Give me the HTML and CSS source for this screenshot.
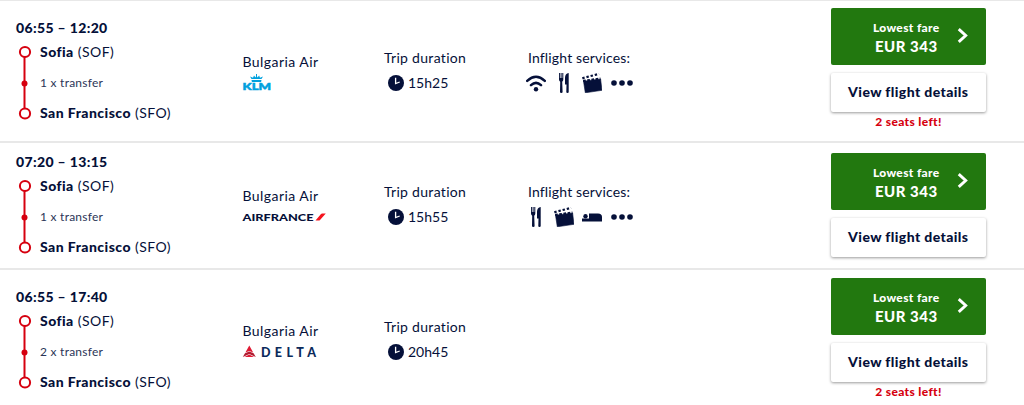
FILE: index.html
```html
<!DOCTYPE html>
<html lang="en">
<head>
  <meta charset="UTF-8" />
  <title>Flight results</title>
  <link rel="stylesheet" href="styles.css">
</head>
<body>
  <!-- Shared icons -->
  <svg class="sprite" width="0" height="0">
    <symbol id="clock" viewBox="0 0 16 16">
      <circle cx="8" cy="8" r="8" fill="#051039"/>
      <path d="M7.600 2.800v5.700L11.700 7" fill="none" stroke="#fff" stroke-width="1.300"/>
    </symbol>
    <symbol id="wifi" viewBox="0 0 20 18">
      <path d="M1.200 6.800Q10-1.300 18.800 6.800M5 11.200Q10 6.600 15 11.200" fill="none" stroke="#051039" stroke-width="2.500" stroke-linecap="round"/>
      <circle cx="10" cy="15.200" r="2.200" fill="#051039"/>
    </symbol>
    <symbol id="meal" viewBox="0 0 10 20">
      <path d="M0 0h.9v5h.7V0h1v5h.7V0h1v6.500q0 1.600-1.100 2.200L3.600 19q0 1-1.300 1T1 19l.2-10.300Q0 8 0 6.500zM9.700 0v19q0 1-1.200 1t-1.200-1l.2-7.500H6V5Q6 .5 9.700 0z" fill="#051039"/>
    </symbol>
    <symbol id="film" viewBox="0 0 20 20">
      <path d="M1.500 8.200 18.600 6 20 17.300 3.300 19.800z" fill="#051039" stroke="#051039" stroke-width=".6" stroke-linejoin="round"/>
      <path d="M.3 5.300 17 .8" stroke="#051039" stroke-width="2.200" stroke-dasharray="2.400 1.900"/>
      <path d="M1.100 7.900 18.500 5.600" stroke="#051039" stroke-width="2.200" stroke-dasharray="2.700 1.500"/>
    </symbol>
    <symbol id="bed" viewBox="0 0 20 9">
      <path d="M0 5.600h20v2.900H0zM7 5.800V.5h9q4 0 4 3.500v1.800z" fill="#051039"/>
      <circle cx="3.500" cy="3.200" r="2.200" fill="#051039"/>
    </symbol>
    <symbol id="more" viewBox="0 0 22 6">
      <circle cx="3" cy="3" r="2.800" fill="#051039"/>
      <circle cx="11" cy="3" r="2.800" fill="#051039"/>
      <circle cx="19" cy="3" r="2.800" fill="#051039"/>
    </symbol>
    <symbol id="arrow" viewBox="0 0 10 14">
      <path d="M1.500 1 8 7 1.500 13" fill="none" stroke="#fff" stroke-width="2.700"/>
    </symbol>
    <symbol id="route" viewBox="0 0 14 76">
      <path d="M6.500 7v62" stroke="#d6000f" stroke-width="2"/>
      <circle cx="7" cy="7" r="5.100" fill="#fff" stroke="#d6000f" stroke-width="2"/>
      <circle cx="6.500" cy="38.500" r="3" fill="#d6000f"/>
      <circle cx="7" cy="68.500" r="5.100" fill="#fff" stroke="#d6000f" stroke-width="2"/>
    </symbol>
  </svg>

  <!-- KLM -->
  <section class="flight flight-first">
    <div class="trip">
      <div class="times">06:55 – 12:20</div>
      <div class="stops">
        <svg class="route"><use href="#route"/></svg>
        <div class="names">
          <div class="city"><b>Sofia</b> (SOF)</div>
          <div class="transfer">1 x transfer</div>
          <div class="city"><b>San Francisco</b> (SFO)</div>
        </div>
      </div>
    </div>
    <div class="airline">
      <div class="label">Bulgaria Air</div>
      <svg class="logo" width="90" height="20" viewBox="0 0 90 20">
        <path d="M9.500 6h10l-.4 2H9.900zM9.500 5 8 2.500l3 1.300L12 1.500l1.600 2L14.500 1 15.500 3.500l1.600-2 .9 2.300 3-1.300L19.500 5zM14 0h1v2h-1z" fill="#00a1de"/>
        <text class="klm" x=".5" y="16.400" textLength="28.500" lengthAdjust="spacingAndGlyphs">KLM</text>
      </svg>
    </div>
    <div class="duration">
      <div class="label">Trip duration</div>
      <div class="time"><svg class="clock"><use href="#clock"/></svg>15h25</div>
    </div>
    <div class="services">
      <div class="label">Inflight services:</div>
      <div class="icons">
        <svg class="wifi"><use href="#wifi"/></svg>
        <svg class="meal"><use href="#meal"/></svg>
        <svg class="film"><use href="#film"/></svg>
        <svg class="more"><use href="#more"/></svg>
      </div>
    </div>
    <div class="fare">
      <button class="price"><span class="amount"><small>Lowest fare</small>EUR 343</span><svg class="arrow"><use href="#arrow"/></svg></button>
      <button class="details">View flight details</button>
      <div class="seats">2 seats left!</div>
    </div>
  </section>

  <!-- Air France -->
  <section class="flight flight-second">
    <div class="trip">
      <div class="times">07:20 – 13:15</div>
      <div class="stops">
        <svg class="route"><use href="#route"/></svg>
        <div class="names">
          <div class="city"><b>Sofia</b> (SOF)</div>
          <div class="transfer">1 x transfer</div>
          <div class="city"><b>San Francisco</b> (SFO)</div>
        </div>
      </div>
    </div>
    <div class="airline">
      <div class="label">Bulgaria Air</div>
      <svg class="logo" width="90" height="20" viewBox="0 0 90 20">
        <text class="airfrance" x=".5" y="12.500" textLength="71" lengthAdjust="spacingAndGlyphs">AIRFRANCE</text>
        <path d="M73.500 12.500 79 6q.4-.5 1.200-.5h3.600L78 12q-.4.500-1.200.500z" fill="#f5141e"/>
      </svg>
    </div>
    <div class="duration">
      <div class="label">Trip duration</div>
      <div class="time"><svg class="clock"><use href="#clock"/></svg>15h55</div>
    </div>
    <div class="services">
      <div class="label">Inflight services:</div>
      <div class="icons">
        <svg class="meal meal-start"><use href="#meal"/></svg>
        <svg class="film"><use href="#film"/></svg>
        <svg class="bed"><use href="#bed"/></svg>
        <svg class="more"><use href="#more"/></svg>
      </div>
    </div>
    <div class="fare">
      <button class="price"><span class="amount"><small>Lowest fare</small>EUR 343</span><svg class="arrow"><use href="#arrow"/></svg></button>
      <button class="details">View flight details</button>
    </div>
  </section>

  <!-- Delta -->
  <section class="flight flight-third">
    <div class="trip">
      <div class="times">06:55 – 17:40</div>
      <div class="stops">
        <svg class="route"><use href="#route"/></svg>
        <div class="names">
          <div class="city"><b>Sofia</b> (SOF)</div>
          <div class="transfer">2 x transfer</div>
          <div class="city"><b>San Francisco</b> (SFO)</div>
        </div>
      </div>
    </div>
    <div class="airline">
      <div class="label">Bulgaria Air</div>
      <svg class="logo" width="90" height="20" viewBox="0 0 90 20">
        <path d="M7.300 2.500 11.200 9.600 7.300 7.900 3.400 9.600z" fill="#e01933"/>
        <path d="M3 10.300 7.300 8.400V11L.8 14zM11.600 10.300 7.300 8.400V11l6.500 3z" fill="#b01c30"/>
        <path d="M2.500 14 7.300 11.600 12.100 14z" fill="#e01933"/>
        <text class="delta" x="19" y="13.700" textLength="55" lengthAdjust="spacing">DELTA</text>
      </svg>
    </div>
    <div class="duration">
      <div class="label">Trip duration</div>
      <div class="time"><svg class="clock"><use href="#clock"/></svg>20h45</div>
    </div>
    <div class="services"></div>
    <div class="fare">
      <button class="price"><span class="amount"><small>Lowest fare</small>EUR 343</span><svg class="arrow"><use href="#arrow"/></svg></button>
      <button class="details">View flight details</button>
      <div class="seats">2 seats left!</div>
    </div>
  </section>
</body>
</html>
```

FILE: styles.css
```css
body {
  margin: 0;
  font-family: Lato, "Open Sans", sans-serif;
  font-size: 14px;
  color: #051039;
  background: #fff;
  overflow: hidden;
}
.sprite, svg { display: block; }
.sprite { position: absolute; }
.flight {
  display: grid;
  grid-template-columns: 226px 142px 143px 303.5px 156px;
  align-items: start;
  box-sizing: border-box;
  padding-left: 16px;
  border-bottom: 2px solid #e8e8e8;
}
.flight-first {
  height: 143px;
  padding-top: 17px;
  border-top: 1px solid #e8e8e8;
}
.flight-second {
  height: 127px;
  padding-top: 9px;
}
.flight-third {
  height: 135px;
  padding-top: 17px;
  border-bottom: 0;
}
.times {
  line-height: 20px;
  font-weight: 900;
  letter-spacing: 0.35px;
}
.stops {
  display: flex;
  gap: 8px;
  padding: 6.5px 0 0 2px;
}
.route {
  width: 14px;
  height: 76px;
}
.names { margin-top: -3px; }
.city {
  line-height: 20px;
  font-size: 14px;
  letter-spacing: 0.45px;
  white-space: nowrap;
}
.city b { font-weight: 900; }
.transfer {
  line-height: 20px;
  margin: 11px 0 10px;
  font-size: 12px;
  letter-spacing: 0.25px;
  color: #2c3557;
}
.airline { padding-top: 34px; }
.label {
  line-height: 20px;
  letter-spacing: 0.3px;
  white-space: nowrap;
}
.airline .label {
  padding-left: 0.5px;
  letter-spacing: 0.45px;
}
.logo { margin-top: 2px; }
.klm {
  font: 900 10px Lato, sans-serif;
  fill: #00a1de;
  stroke: #00a1de;
  stroke-width: 0.5px;
}
.airfrance {
  font: 900 9.5px Lato, sans-serif;
  fill: #051039;
}
.delta {
  font: 900 12.5px Lato, sans-serif;
  fill: #0b2a5b;
}
.duration, .services { padding-top: 30px; }
.services .label {
  padding-left: 1px;
  letter-spacing: 0.15px;
}
.time {
  display: flex;
  align-items: center;
  gap: 4px;
  margin-top: 5px;
  padding-left: 4px;
  line-height: 20px;
}
.clock {
  width: 16px;
  height: 16px;
}
.icons {
  display: flex;
  align-items: center;
  height: 20px;
  margin-top: 5px;
  margin-left: -1px;
}
.wifi {
  width: 20px;
  height: 18px;
}
.meal {
  width: 10px;
  height: 20px;
  margin: 0 13px;
}
.meal-start { margin-left: 5px; }
.film {
  width: 20px;
  height: 20px;
  margin-right: 9px;
}
.flight-second .film { margin-right: 8px; }
.bed {
  width: 20px;
  height: 9px;
  margin-right: 9px;
}
.more {
  width: 22px;
  height: 6px;
}
.fare { text-align: center; }
.flight-first .fare { margin-top: -10px; }
.flight-second .fare { margin-top: 1px; }
.flight-third .fare { margin-top: -9px; }
button {
  display: flex;
  align-items: center;
  justify-content: center;
  width: 155.5px;
  padding: 0;
  border: 0;
  border-radius: 2px;
  font: bold 14px Lato, sans-serif;
  color: #051039;
}
.price {
  height: 57px;
  padding-left: 24px;
  gap: 17px;
  background: #22780f;
  color: #fff;
  font-size: 15px;
  font-weight: 900;
  letter-spacing: 0.5px;
}
.amount { line-height: 19px; }
.price small {
  display: block;
  line-height: 19px;
  font-size: 12px;
  font-weight: 900;
  letter-spacing: 0.35px;
}
.arrow {
  width: 11px;
  height: 15px;
  margin-top: -2px;
}
.details {
  height: 39px;
  margin-top: 8px;
  padding-bottom: 2px;
  background: #fff;
  box-shadow: 0 1px 3px rgba(0,0,0,0.4);
  font-weight: 900;
  letter-spacing: 0.4px;
}
.seats {
  line-height: 19px;
  font-size: 12px;
  font-weight: 900;
  letter-spacing: 0.35px;
  color: #d6000f;
}
```
